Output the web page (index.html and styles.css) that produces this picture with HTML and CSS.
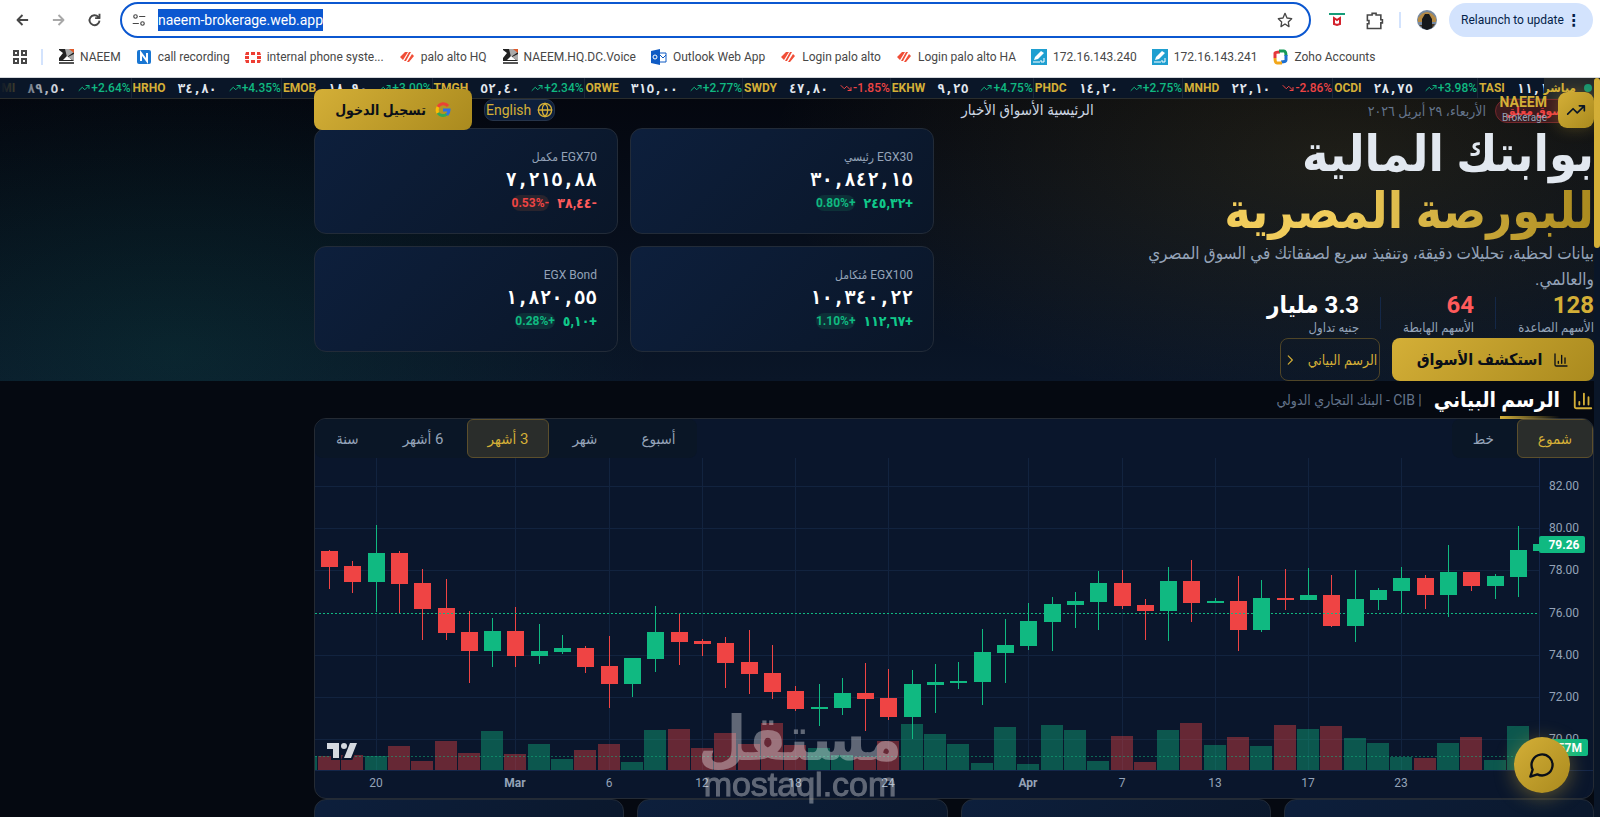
FILE: index.html
```html
<!DOCTYPE html>
<html lang="ar">
<head>
    <meta charset="UTF-8">
    <meta name="viewport" content="width=device-width, initial-scale=1.0">
    <title>NAEEM Brokerage</title>
    <link rel="stylesheet" href="styles.css">
</head>
<body>

    <svg class="sprite" aria-hidden="true">
        <symbol id="up" viewBox="0 0 24 24"><path d="M22 7l-8.500 8.500-5-5L2 17M16 7h6v6"/></symbol>
        <symbol id="down" viewBox="0 0 24 24"><path d="M22 17l-8.500-8.500-5 5L2 7M16 17h6v-6"/></symbol>
        <symbol id="bars" viewBox="0 0 24 24"><path d="M3 3v16a2 2 0 0 0 2 2h16M18 17V9M13 17V5M8 17v-3"/></symbol>
        <symbol id="naeem" viewBox="0 0 16 16"><path fill="#222" d="M1 0h15v12H1z"/><path fill="#aaa" d="M7 0h9v3L9 8zM16 12V5l-6 3z"/><path fill="#fff" d="M1 1l4 3-4 5zM5 11l4-4 5 4z"/><path fill="#e05a2b" d="M11 0h5v4z"/><path fill="#555" d="M1 13h15v2H1z"/></symbol>
        <symbol id="palo" viewBox="0 0 16 16"><path fill="#f04e37" d="M6 3h3l-5 8-3-3zM10 3h2l-5 9H5zM13 5l2 2-5 6H8z"/></symbol>
        <symbol id="pbx" viewBox="0 0 16 16"><path fill="#1f9fd0" d="M0 0h16v16H0z"/><path fill="#fff" d="M10 2l3 2-6 6-4 1 1-3z"/><path fill="none" stroke="#fff" stroke-width="1" d="M2 13h7M13 9v4h-3v-2"/></symbol>
    </svg>

    <div class="browser">
        <div class="toolbar">
            <button class="tool" aria-label="Back"><svg class="icon" viewBox="0 0 24 24"><path d="M21 12H4M12 4l-8 8 8 8"/></svg></button>
            <button class="tool faded" aria-label="Forward"><svg class="icon" viewBox="0 0 24 24"><path d="M3 12h17M12 4l8 8-8 8"/></svg></button>
            <button class="tool" aria-label="Reload"><svg class="icon" viewBox="0 0 24 24"><path d="M20 13a8 8 0 1 1-2-6l2 2M20 2v7h-7"/></svg></button>
            <div class="address">
                <svg class="icon" viewBox="0 0 24 24"><circle cx="6" cy="6" r="3"/><path d="M13 6h9M2 18h9"/><circle cx="18" cy="18" r="3"/></svg>
                <span class="url">naeem-brokerage.web.app</span>
                <svg class="icon star" viewBox="0 0 24 24"><path d="M12 2l3 7 7 1-5 5 1 7-6-4-6 4 1-7-5-5 7-1z"/></svg>
            </div>
            <svg class="ext" viewBox="0 0 16 16"><path fill="#169c78" d="M0 1h16v2H0z"/><path fill="none" stroke="#d3222c" stroke-width="2" d="M5 12V6l3 2 3-2v6l-3 1z"/></svg>
            <svg class="ext puzzle" viewBox="0 0 24 24"><path d="M3 5h6V3h5v2h6v6h2v4h-2v7H3v-6h2v-4H3z"/></svg>
            <span class="split"></span>
            <svg class="avatar" viewBox="0 0 20 20"><circle cx="10" cy="10" r="10" fill="#7689a0"/><path d="M1 8Q10-4 19 8v4H1z" fill="#b58a45"/><path d="M5 18V9l3-5h4l3 5v9l-5 2z" fill="#15181c"/><path d="M2 15h3v2zM15 14h3l-3 4z" fill="#46341f"/></svg>
            <button class="relaunch">Relaunch to update <b>⋮</b></button>
        </div>
        <div class="bookmarks">
            <svg class="apps" viewBox="0 0 16 16"><path d="M2 2h4v4H2zM10 2h4v4h-4zM2 10h4v4H2zM10 10h4v4h-4z"/></svg>
            <span class="split"></span>
            <a href="#"><svg><use href="#naeem"/></svg>NAEEM</a>
            <a href="#"><svg viewBox="0 0 16 16"><rect x="1" y="1" width="14" height="14" rx="2" fill="#1976d2"/><path d="M5 12V4l6 8V4" fill="none" stroke="#fff" stroke-width="2"/></svg>call recording</a>
            <a href="#"><svg viewBox="0 0 16 16"><path fill="#ee3e33" d="M1 3h3v3H0zM6 3h4v3H6zM12 3h3l1 3h-4zM0 7h4v3H0zM12 7h4v3h-4zM0 11h4v3H1zM6 11h4v3H6zM12 11h4l-1 3h-3z"/></svg>internal phone syste...</a>
            <a href="#"><svg><use href="#palo"/></svg>palo alto HQ</a>
            <a href="#"><svg><use href="#naeem"/></svg>NAEEM.HQ.DC.Voice</a>
            <a href="#"><svg viewBox="0 0 16 16"><path fill="#0f5bc4" d="M0 2l9-2v16l-9-2z"/><path fill="none" stroke="#0f5bc4" d="M9 4h6v9H9M9 6l3 3 3-3"/><circle cx="4" cy="8" r="2" fill="none" stroke="#fff"/></svg>Outlook Web App</a>
            <a href="#"><svg><use href="#palo"/></svg>Login palo alto</a>
            <a href="#"><svg><use href="#palo"/></svg>Login palo alto HA</a>
            <a href="#"><svg><use href="#pbx"/></svg>172.16.143.240</a>
            <a href="#"><svg><use href="#pbx"/></svg>172.16.143.241</a>
            <a href="#"><svg viewBox="0 0 16 16" fill="none" stroke-width="3"><path stroke="#e5383b" d="M3 9V4q0-1 5-1"/><path stroke="#159957" d="M7 2h5q2 0 2 5"/><path stroke="#1e6fd0" d="M14 6v5q0 2-5 2"/><path stroke="#f2a71b" d="M10 14H5q-2 0-2-5"/></svg>Zoho Accounts</a>
        </div>
    </div>

    <div class="page" dir="rtl">
        <div class="scrollbar"><span></span></div>
        <div class="content">
            <div class="ticker" dir="ltr">
                <div class="track" id="track"></div>
                <div class="live" dir="rtl"><i></i>مباشر</div>
            </div>

            <header class="header">
                <div class="brand">
                    <span class="logo"><svg class="icon"><use href="#up"/></svg></span>
                    <span class="brand-name"><b>NAEEM</b><small>Brokerage</small></span>
                </div>
                <nav class="nav">
                    <a href="#">الرئيسية</a> <a href="#">الأسواق</a> <a href="#">الأخبار</a>
                </nav>
                <div class="actions">
                    <button class="lang"><svg class="icon" viewBox="0 0 24 24"><circle cx="12" cy="12" r="10"/><path d="M12 2a14 14 0 0 0 0 20 14 14 0 0 0 0-20M2 12h20"/></svg>English</button>
                    <button class="login">
                        <svg viewBox="0 0 16 16" fill="none" stroke-width="3"><path stroke="#ea4335" d="M3 5a6 6 0 0 1 10-1"/><path stroke="#fbbc05" d="M3 11a6 6 0 0 1 0-6"/><path stroke="#34a853" d="M12 12a6 6 0 0 1-9-1"/><path stroke="#2f6fe4" d="M8 8h6q0 3-2 5"/></svg>
                        تسجيل الدخول
                    </button>
                </div>
            </header>

            <section class="hero">
                <div class="container hero-grid">
                    <div class="hero-text">
                        <div class="status"><span class="closed">سوق مغلق</span><span class="date">الأربعاء، ٢٩ أبريل ٢٠٢٦</span></div>
                        <h1>بوابتك المالية<br><span>للبورصة المصرية</span></h1>
                        <p>بيانات لحظية، تحليلات دقيقة، وتنفيذ سريع لصفقاتك في السوق المصري والعالمي.</p>
                        <div class="stats">
                            <div class="stat gold"><b>128</b><small>الأسهم الصاعدة</small></div>
                            <div class="stat red"><b>64</b><small>الأسهم الهابطة</small></div>
                            <div class="stat"><b>3.3 مليار</b><small>جنيه تداول</small></div>
                        </div>
                        <div class="cta">
                            <button class="primary"><svg class="icon"><use href="#bars"/></svg>استكشف الأسواق</button>
                            <button class="outline">الرسم البياني<svg class="icon" viewBox="0 0 24 24"><path d="M9 5l7 7-7 7"/></svg></button>
                        </div>
                    </div>
                    <div class="indices">
                        <div class="index"><small>EGX30 رئيسي</small><b>٣٠,٨٤٢,١٥</b><p>+٢٤٥,٣٢ <em>+0.80%</em></p></div>
                        <div class="index fall"><small>EGX70 مكمل</small><b>٧,٢١٥,٨٨</b><p>-٣٨,٤٤ <em>-0.53%</em></p></div>
                        <div class="index"><small>EGX100 مُتكامل</small><b>١٠,٣٤٠,٢٢</b><p>+١١٢,٦٧ <em>+1.10%</em></p></div>
                        <div class="index"><small>EGX Bond</small><b>١,٨٢٠,٥٥</b><p>+٥,١٠ <em>+0.28%</em></p></div>
                    </div>
                </div>
            </section>

            <section class="container">
                <div class="section-head">
                    <svg class="icon"><use href="#bars"/></svg>
                    <h2>الرسم البياني</h2>
                    <span>| CIB - البنك التجاري الدولي</span>
                </div>
                <div class="panel">
                    <div class="tabs">
                        <div class="group"><button class="on">شموع</button><button>خط</button></div>
                        <div class="group"><button>أسبوع</button><button>شهر</button><button class="on">3 أشهر</button><button>6 أشهر</button><button>سنة</button></div>
                    </div>
                    <svg class="chart" id="chart" viewBox="0 0 1278 340" direction="ltr"></svg>
                </div>
                <div class="cards"><div></div><div></div><div></div><div></div></div>
            </section>
        </div>
    </div>

    <div class="watermark" aria-hidden="true"><b>مستقل</b><span>mostaql.com</span></div>
    <button class="chat" aria-label="Chat"><svg class="icon" viewBox="0 0 24 24"><path d="M8 20A9 9 0 1 0 4 16L2 22Z"/></svg></button>

    <script src="script.js"></script>
</body>
</html>
```
FILE: styles.css
```css
* {
    box-sizing: border-box;
}
body {
    margin: 0;
    height: 100vh;
    overflow: hidden;
    display: flex;
    flex-direction: column;
    background: #050911;
    color: #e2e8f0;
    font-family: Roboto, "DejaVu Sans Condensed", "DejaVu Sans", sans-serif;
}
button {
    font-family: inherit;
    cursor: pointer;
    border: none;
    background: none;
    padding: 0;
}
a {
    color: inherit;
    text-decoration: none;
}
.sprite {
    position: absolute;
    width: 0;
    height: 0;
}
.icon {
    width: 16px;
    height: 16px;
    flex: none;
    fill: none;
    stroke: currentColor;
    stroke-width: 2;
    stroke-linecap: round;
    stroke-linejoin: round;
}

/* Browser bar */
.browser {
    flex: none;
    height: 78px;
    background: #fff;
    color: #474747;
    border-bottom: 1px solid #d5d8dc;
    font-size: 12px;
}
.toolbar {
    display: flex;
    align-items: center;
    height: 40px;
    padding: 1px 7px 1px 15px;
}
.tool {
    width: 36px;
    height: 16px;
    text-align: left;
    color: #474747;
}
.tool .icon {
    width: 15px;
    stroke-width: 3;
    stroke-linecap: butt;
}
.faded {
    color: #a8a8a8;
}
.address {
    flex: 1;
    display: flex;
    align-items: center;
    height: 36px;
    margin-left: -3px;
    padding: 0 16px 0 10px;
    border: 2px solid #0b57d0;
    border-radius: 18px;
    font-size: 14px;
}
.address .icon {
    width: 14px;
}
.address .star {
    width: 16px;
    margin-left: auto;
}
.url {
    margin-left: 12px;
    background: #0b57d0;
    color: #fff;
    line-height: 22px;
}
.ext {
    width: 16px;
    height: 16px;
    margin-left: 18px;
}
.puzzle {
    width: 19px;
    height: 19px;
    margin-left: 20px;
    fill: none;
    stroke: #474747;
    stroke-width: 2;
}
.split {
    width: 2px;
    height: 16px;
    margin-left: 15px;
    background: #d3e3fd;
}
.avatar {
    width: 20px;
    height: 20px;
    margin: 0 12px 0 16px;
}
.relaunch {
    display: flex;
    align-items: center;
    justify-content: space-between;
    min-width: 144px;
    height: 34px;
    padding: 0 12px;
    border-radius: 17px;
    background: #d3e3fd;
    color: #041e49;
    font-size: 12px;
    white-space: nowrap;
}
.relaunch b {
    font-size: 16px;
}
.bookmarks {
    display: flex;
    align-items: center;
    height: 34px;
    padding: 0 12px;
    white-space: nowrap;
}
.bookmarks a {
    display: flex;
    align-items: center;
    gap: 6px;
    margin-left: 15px;
}
.bookmarks a svg {
    width: 16px;
    height: 16px;
}
.apps {
    width: 16px;
    height: 16px;
    fill: none;
    stroke: #474747;
    stroke-width: 2;
}
.bookmarks .split {
    margin-left: 13px;
}

/* Page */
.page {
    flex: 1;
    min-height: 0;
    display: flex;
    flex-direction: row-reverse;
    direction: ltr;
}
.page > * {
    direction: rtl;
}
.scrollbar {
    width: 6px;
    order: -1;
    background: #0a1628;
}
.scrollbar span {
    display: block;
    height: 170px;
    border-radius: 3px;
    background: #d4af37;
}
.content {
    flex: 1;
    min-width: 0;
    overflow: hidden;
}
.container {
    max-width: 1280px;
}
.ticker {
    position: relative;
    height: 21px;
    overflow: hidden;
    background: #0a1628;
    border-bottom: 1px solid #2a2d2c;
}
.ticker::before {
    content: "";
    position: absolute;
    left: 0;
    top: 0;
    width: 60px;
    height: 20px;
    background: linear-gradient(90deg, #0a1628, transparent);
}
.track {
    display: flex;
    height: 20px;
    margin-left: -16px;
    font-size: 12px;
    line-height: 20px;
    white-space: nowrap;
}
.item {
    display: flex;
    align-items: center;
    flex: none;
    gap: 12px;
    padding-left: 1px;
    border-right: 1px solid #1b2738;
}
.item b {
    color: #d4af37;
}
.item i {
    font: bold 13px "DejaVu Sans Mono", monospace;
}
.item span {
    display: flex;
    align-items: center;
    gap: 1px;
    color: #10b981;
    font-weight: 500;
}
.item .fall {
    color: #ef4444;
}
.item .icon {
    width: 12px;
    height: 12px;
}
.live {
    position: absolute;
    top: 0;
    right: 0;
    display: flex;
    align-items: center;
    gap: 8px;
    height: 20px;
    padding: 0 2px 0 0;
    background: #24292c;
    color: #d4af37;
    font-size: 12px;
    font-weight: bold;
}
.live i {
    width: 8px;
    height: 8px;
    border-radius: 50%;
    background: #129471;
}
.header {
    position: absolute;
    z-index: 2;
    top: 89px;
    right: 6px;
    width: calc(100% - 6px);
    max-width: 1280px;
    height: 41px;
    display: flex;
    align-items: center;
    justify-content: space-between;
}
.brand {
    display: flex;
    align-items: center;
    gap: 11px;
}
.logo {
    width: 36px;
    height: 36px;
    display: flex;
    align-items: center;
    justify-content: center;
    border-radius: 9px;
    background: linear-gradient(135deg, #d4af37, #aa8a1e);
    box-shadow: 0 0 16px rgba(212, 175, 55, 0.3);
    color: #0a1628;
}
.logo .icon {
    width: 20px;
    height: 20px;
}
.brand-name {
    display: flex;
    flex-direction: column;
    text-align: right;
    color: #d4af37;
    font-size: 14px;
    line-height: 15px;
}
.brand-name small {
    color: #94a3b8;
    font-size: 10px;
}
.nav {
    font-size: 15px;
    color: #cbd5e1;
}
.actions {
    display: flex;
    align-items: center;
    gap: 12px;
}
.lang {
    display: flex;
    align-items: center;
    gap: 6px;
    height: 22px;
    padding: 0 1px;
    border: 1px solid #26344a;
    border-radius: 9px;
    background: #0d1f3c;
    color: #d4af37;
    font-size: 14px;
}
.login {
    display: flex;
    align-items: center;
    justify-content: center;
    gap: 9px;
    width: 158px;
    height: 41px;
    border-radius: 8px;
    background: linear-gradient(135deg, #d4af37, #aa8a1e);
    color: #0a0f18;
    font-size: 14px;
    font-weight: bold;
}
.login svg {
    width: 16px;
    height: 16px;
}

/* Hero */
.hero {
    background:
        radial-gradient(ellipse 36% 90% at 84% 20%, rgba(212, 175, 55, 0.12), transparent),
        radial-gradient(ellipse 30% 100% at 11% 90%, rgba(16, 185, 129, 0.1), transparent),
        linear-gradient(180deg, #04070f, #0a1628);
}
.hero-grid {
    display: grid;
    grid-template-columns: 1fr 1fr;
    gap: 40px;
    align-items: center;
}
.status {
    display: flex;
    align-items: center;
    gap: 9px;
    height: 24px;
    margin-bottom: 3px;
}
.closed {
    width: 99px;
    padding-left: 10px;
    border: 1px solid #73272b;
    border-radius: 12px;
    background: #3b1a1e;
    color: #ef4444;
    font-size: 12px;
    font-weight: bold;
    line-height: 22px;
    text-align: left;
}
.date {
    color: #64748b;
    font-size: 14px;
}
h1 {
    margin: 0;
    font-size: 50px;
    line-height: 57px;
    white-space: nowrap;
}
h1 span {
    display: inline-block;
    background: linear-gradient(270deg, #aa8a1e, #f0cc5b 70%);
    -webkit-background-clip: text;
    background-clip: text;
    color: transparent;
}
.hero-text p {
    max-width: 480px;
    margin: 0;
    color: #94a3b8;
    font-size: 17px;
    line-height: 26px;
}
.stats {
    display: flex;
    height: 46px;
}
.stat {
    display: flex;
    flex-direction: column;
    color: #fff;
    padding-left: 22px;
    margin-left: 22px;
}
.stat + .stat {
    position: relative;
}
.stat + .stat::before {
    content: "";
    position: absolute;
    right: -22px;
    top: 5px;
    width: 1px;
    height: 32px;
    background: #142848;
}
.stat b {
    font-size: 24px;
    line-height: 26px;
}
.stat small {
    color: #94a3b8;
    font-size: 13px;
    line-height: 20px;
}
.gold b {
    color: #d4af37;
}
.red b {
    color: #ff5b5b;
}
.cta {
    display: flex;
    gap: 12px;
}
.cta button {
    display: flex;
    align-items: center;
    justify-content: center;
    gap: 11px;
    height: 43px;
    border-radius: 8px;
    font-size: 16px;
    white-space: nowrap;
}
.primary {
    width: 202px;
    background: linear-gradient(135deg, #d4af37, #aa8a1e);
    color: #0a0f18;
    font-weight: bold;
}
.cta .outline {
    width: 100px;
    border: 1px solid #4f4527;
    color: #d4af37;
    font-size: 14px;
}
.cta .outline .icon {
    width: 14px;
}
.indices {
    display: grid;
    grid-template-columns: 1fr 1fr;
    gap: 12px;
}
.index {
    height: 106px;
    padding: 18px 20px;
    border: 1px solid #222b38;
    border-radius: 12px;
    background: linear-gradient(135deg, #0d1f3c, #0a1628);
}
.index small {
    display: block;
    color: #94a3b8;
    font-size: 12px;
    line-height: 20px;
}
.index b {
    display: block;
    color: #fff;
    font: bold 19px/24px "DejaVu Sans Mono", monospace;
}
.hero .index p {
    display: flex;
    align-items: center;
    gap: 8px;
    margin: 0;
    color: #10c98a;
    font-size: 14px;
    font-weight: bold;
    line-height: 24px;
}
.index em {
    border-radius: 8px;
    background: #0d3038;
    color: #10b981;
    font-size: 12px;
    font-style: normal;
    line-height: 16px;
}
.hero .fall p {
    color: #ff5b5b;
}
.index.fall em {
    background: #29242e;
    color: #ef4444;
}

/* Chart */
.section-head {
    display: flex;
    align-items: center;
    gap: 12px;
    height: 37px;
}
.section-head .icon {
    width: 22px;
    height: 22px;
    color: #d4af37;
}
.section-head h2 {
    position: relative;
    margin: 0;
    color: #fff;
    font-size: 21px;
    line-height: 30px;
}
.section-head h2::after {
    content: "";
    position: absolute;
    right: 0;
    bottom: -4px;
    width: 60px;
    height: 3px;
    background: linear-gradient(90deg, #d4af37, transparent);
}
.section-head span {
    color: #64748b;
    font-size: 14px;
}
.panel {
    overflow: hidden;
    border: 1px solid #252b34;
    border-radius: 12px;
    background: #0a162c;
}
.tabs {
    display: flex;
    justify-content: space-between;
}
.group {
    display: flex;
    gap: 2px;
    border-radius: 8px;
    background: #0a1626;
}
.group button {
    height: 39px;
    padding: 0 20px;
    border: 1px solid transparent;
    border-radius: 6px;
    color: #94a3b8;
    font-size: 15px;
}
.group .on {
    border-color: #5c4f2c;
    background: #2a2d2b;
    color: #d4af37;
}
.chart {
    display: block;
    width: 100%;
    font-size: 12px;
}
.cards {
    display: grid;
    grid-template-columns: repeat(4, 1fr);
    gap: 13px;
}
.cards div {
    height: 106px;
    border: 1px solid #222b38;
    border-radius: 12px;
    background: linear-gradient(135deg, #0d1f3c, #0a1628);
}

.watermark {
    position: absolute;
    left: 703px;
    top: 713px;
    width: 194px;
    display: flex;
    flex-direction: column;
    align-items: center;
    color: #fff;
    opacity: 0.35;
}
.watermark b {
    font-size: 62px;
    line-height: 52px;
}
.watermark span {
    font: 34px/38px "Liberation Sans", sans-serif;
    -webkit-text-stroke: 1px #fff;
}
.chat {
    position: absolute;
    right: 30px;
    bottom: 24px;
    width: 56px;
    height: 56px;
    display: flex;
    align-items: center;
    justify-content: center;
    border-radius: 50%;
    background: linear-gradient(135deg, #d4af37, #aa8a1e);
    box-shadow: 0 4px 20px rgba(212, 175, 55, 0.4);
    color: #0a0f18;
}
.chat .icon {
    width: 28px;
    height: 28px;
}
```
FILE: script.js
```js
const quotes = [
    ['COMI', '٨٩,٥٠', '+2.64%'],
    ['HRHO', '٣٤,٨٠', '+4.35%'],
    ['EMOB', '١٨,٩٠', '+3.00%'],
    ['TMGH', '٥٢,٤٠', '+2.34%'],
    ['ORWE', '٣١٥,٠٠', '+2.77%'],
    ['SWDY', '٤٧,٨٠', '-1.85%'],
    ['EKHW', '٩,٢٥', '+4.75%'],
    ['PHDC', '١٤,٢٠', '+2.75%'],
    ['MNHD', '٢٢,١٠', '-2.86%'],
    ['OCDI', '٢٨,٧٥', '+3.98%'],
    ['TASI', '١١,١٠', '+1.20%']
];

document.getElementById('track').innerHTML = quotes.map(([symbol, price, change]) => {
    const fall = change[0] === '-';
    return `<div class="item"><b>${symbol}</b><i>${price}</i><span class="${fall ? 'fall' : ''}"><svg class="icon"><use href="#${fall ? 'down' : 'up'}"/></svg>${change}</span></div>`;
}).join('');

// colour, high, body top, body bottom, low, volume top (in thirds of a pixel)
const candles = [
    ['r', 435, 438, 486, 552, 1053], ['r', 468, 483, 531, 564, 1050], ['g', 360, 444, 531, 621, 1053],
    ['r', 438, 444, 537, 627, 1023], ['r', 492, 534, 612, 705, 1068], ['r', 522, 609, 684, 705, 1008],
    ['r', 618, 681, 738, 834, 1044], ['g', 639, 678, 738, 786, 978], ['r', 606, 678, 753, 786, 1047],
    ['g', 657, 738, 753, 777, 1017], ['g', 690, 729, 741, 747, 1062], ['r', 723, 729, 786, 804, 1035],
    ['r', 693, 783, 837, 909, 1017], ['g', 759, 759, 837, 876, 1071], ['g', 603, 681, 762, 801, 975],
    ['r', 627, 681, 711, 780, 972], ['r', 702, 708, 717, 753, 1029], ['r', 696, 714, 774, 849, 984],
    ['r', 675, 771, 807, 867, 1017], ['r', 720, 804, 861, 882, 954], ['r', 843, 858, 912, 918, 1020],
    ['g', 837, 906, 912, 963, 1029], ['g', 819, 864, 909, 930, 1050], ['r', 774, 864, 882, 978, 1056],
    ['r', 792, 879, 936, 945, 1008], ['g', 795, 837, 936, 1002, 957], ['g', 777, 831, 840, 924, 987],
    ['g', 771, 828, 834, 852, 1017], ['g', 672, 741, 831, 900, 1074], ['g', 642, 720, 744, 834, 966],
    ['g', 594, 648, 723, 735, 1077], ['g', 576, 597, 651, 738, 960], ['g', 561, 588, 600, 669, 975],
    ['g', 498, 534, 591, 675, 1068], ['r', 495, 534, 603, 612, 993], ['r', 582, 600, 618, 705, 1071],
    ['g', 486, 528, 618, 708, 975], ['r', 465, 528, 594, 651, 954], ['g', 579, 588, 594, 594, 1020],
    ['r', 513, 588, 675, 738, 996], ['g', 525, 579, 675, 681, 1023], ['r', 492, 579, 585, 615, 960],
    ['g', 489, 570, 585, 585, 972], ['r', 510, 570, 663, 666, 963], ['g', 495, 582, 663, 711, 999],
    ['g', 549, 555, 585, 615, 1014], ['g', 486, 519, 558, 624, 1056], ['r', 510, 519, 570, 612, 1059],
    ['g', 420, 501, 570, 636, 1014], ['r', 501, 501, 543, 558, 996], ['g', 507, 513, 543, 582, 1065],
    ['g', 363, 435, 516, 576, 963]
];
const fills = { r: '#ef4444', g: '#10b981' };
const labels = { 2: '20', 8: 'Mar', 12: '6', 16: '12', 20: '18', 24: '24', 30: 'Apr', 34: '7', 38: '13', 42: '17', 46: '23' };
const xAt = i => Math.round(14 + 23.31 * i);
const yAt = t => Math.round(t / 3) - 53;
const rect = (x, y, w, h, fill, extra = '') => `<rect x="${x}" y="${y}" width="${w}" height="${h}" fill="${fill}" ${extra}/>`;

let out = '';

// Grid and price scale
[82, 80, 78, 76, 74, 72, 70].forEach((price, i) => {
    const y = 28 + Math.round(i * 42.2);
    if (price !== 76) out += rect(0, y, 1224, 1, '#12233f');
    out += `<text x="1249" y="${y + 4}" text-anchor="middle" fill="#94a3b8">${price}.00</text>`;
});
Object.entries(labels).forEach(([i, text]) => {
    const weight = isNaN(text) ? 'bold' : 'normal';
    out += rect(xAt(i), 0, 1, 312, '#12233f');
    out += `<text x="${xAt(i)}" y="329" text-anchor="middle" font-weight="${weight}" fill="#94a3b8">${text}</text>`;
});
out += rect(1224, 0, 1, 312, '#14264a') + rect(0, 312, 1278, 1, '#14264a');

// Volume
out += rect(0, 298, 2, 14, '#10b981', 'opacity="0.4"');
candles.forEach(([c, , , , , v], i) => {
    out += rect(xAt(i) - 11, yAt(v), 22, 312 - yAt(v), fills[c], 'opacity="0.4"');
});
out += '<path d="M0 298.5H1224" stroke="#10b981" opacity="0.5" stroke-dasharray="2 2"/>';

// Candles
candles.forEach(([c, high, top, bottom, low], i) => {
    out += rect(xAt(i), yAt(high), 1, yAt(low) - yAt(high), fills[c]);
    out += rect(xAt(i) - 8, yAt(top), 17, yAt(bottom) - yAt(top), fills[c]);
});
out += '<path d="M0 155.5H1224" stroke="#10b981" stroke-dasharray="2 2"/>';
out += rect(1218, 86, 6, 7, '#10b981') + rect(1224, 78, 46, 17, '#10b981', 'rx="2"');
out += '<text x="1249" y="91" text-anchor="middle" font-weight="bold" fill="#fff">79.26</text>';
out += rect(1224, 281, 49, 17, '#10b981', 'rx="2"') + '<text x="1267" y="294" text-anchor="end" font-weight="bold" fill="#fff">3.57M</text>';

// TradingView mark
out += '<path d="M12 285h12v15h-6v-9h-6zM35 285h7l-6 15h-7z" fill="#d5d9df" stroke="#0a162c" stroke-width="4" paint-order="stroke"/><circle cx="29" cy="288" r="3" fill="#d5d9df"/>';

document.getElementById('chart').innerHTML = out;
```
